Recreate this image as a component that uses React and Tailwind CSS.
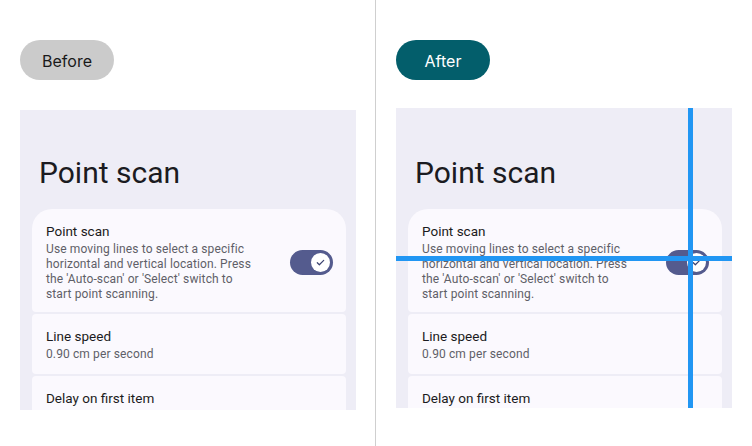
import React from 'react'

const sans = { fontFamily: 'Roboto, "Noto Sans", sans-serif' }
const pill = { fontFamily: 'Inter, "Noto Sans", sans-serif' }

function Toggle() {
  return (
    <div className="flex h-[25px] w-[43px] shrink-0 items-center justify-end rounded-full bg-[#545b8e] pr-[3px]">
      <div className="flex h-[19px] w-[19px] items-center justify-center rounded-full bg-white">
        <svg width="11" height="11" viewBox="0 0 24 24" fill="none" stroke="#3b4270" strokeWidth="2.6" strokeLinecap="round" strokeLinejoin="round">
          <path d="M5 12.5l4.5 4.5L19 7.5" />
        </svg>
      </div>
    </div>
  )
}

function SettingsPanel({ after }) {
  return (
    <div
      className={`relative h-[300px] w-[336px] overflow-hidden bg-[#eeedf6] ${after ? 'mt-[28px] pt-[47px]' : 'mt-[30px] pt-[45px]'}`}
      style={sans}
    >
      <h1 className="px-[19px] text-[30px] leading-[36px] text-[#1b1b21]">Point scan</h1>

      {/* cards */}
      <div className="mt-[18px] flex flex-col gap-[2px] pl-3 pr-[10px]">
        <div className="flex items-center justify-between rounded-t-[20px] rounded-b-[4px] bg-[#fbf9fe] pl-[14px] pr-[13px] pt-[13px] pb-[10px]">
          <div>
            <p className="text-[13.5px] leading-[18px] text-[#1b1b21]">Point scan</p>
            <p className="mt-[2px] text-[12px] leading-[15px] tracking-[0.12px] text-[#5f5f68]">
              Use moving lines to select a specific<br />
              horizontal and vertical location. Press<br />
              the 'Auto-scan' or 'Select' switch to<br />
              start point scanning.
            </p>
          </div>
          <Toggle />
        </div>
        <div className="rounded-[4px] bg-[#fbf9fe] px-[14px] pt-[13px] pb-[12px]">
          <p className="text-[13.5px] leading-[18px] text-[#1b1b21]">Line speed</p>
          <p className="mt-[2px] text-[12px] leading-[15px] tracking-[0.12px] text-[#5f5f68]">0.90 cm per second</p>
        </div>
        <div className="h-[60px] rounded-[4px] bg-[#fbf9fe] px-[14px] pt-[13px]">
          <p className="text-[13.5px] leading-[18px] text-[#1b1b21]">Delay on first item</p>
        </div>
      </div>

      {after && (
        <>
          <div className="absolute top-0 bottom-0 left-[292px] w-[5px] bg-[#2196f3]" />
          <div className="absolute left-0 right-0 top-[148px] h-[5px] bg-[#2196f3]" />
        </>
      )}
    </div>
  )
}

export default function App() {
  return (
    <div className="flex h-[446px] w-[752px] bg-white">
      <div className="h-full w-[376px] border-r border-[#cfcfcf] pl-5 pt-10">
        <div className="flex h-10 w-[94px] items-center justify-center rounded-full bg-[#cbcbcb] pt-px text-[16px] text-[#1a1a1a]" style={pill}>
          Before
        </div>
        <SettingsPanel />
      </div>
      <div className="h-full w-[376px] pl-5 pt-10">
        <div className="flex h-10 w-[94px] items-center justify-center rounded-full bg-[#035e6b] pt-px text-[16px] text-white" style={pill}>
          After
        </div>
        <SettingsPanel after />
      </div>
    </div>
  )
}
